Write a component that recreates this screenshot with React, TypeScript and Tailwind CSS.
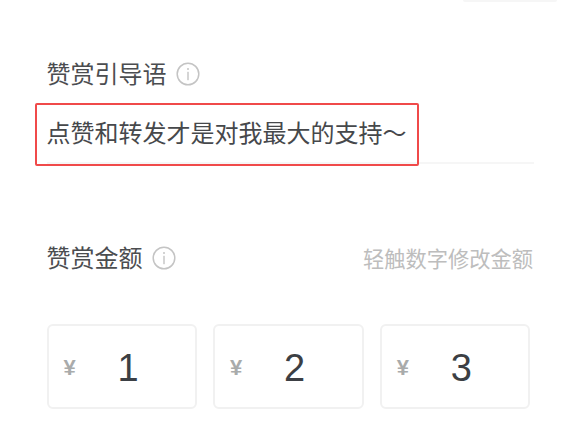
const cjk = "font-['Noto_Sans_CJK_SC','Noto_Sans_CJK_JP',sans-serif]";

function Info() {
  return (
    <svg width="24" height="24" viewBox="0 0 24 24" fill="none" className="shrink-0 translate-y-px">
      <circle cx="12" cy="12" r="10.8" stroke="#c4c4c4" strokeWidth="1.5" />
      <circle cx="12" cy="7" r="1" fill="#c4c4c4" />
      <rect x="11.3" y="9.8" width="1.4" height="8.4" fill="#c4c4c4" />
    </svg>
  );
}

function Amount({ n }: { n: string }) {
  return (
    <div className="w-[150.6px] h-[85px] rounded-md border-2 border-[#f1f1f1] bg-white flex items-center pl-[15px] pt-[2px]">
      <span className="w-[14px] text-[22px] leading-none text-[#a9abab] font-['Liberation_Sans',sans-serif] font-bold">¥</span>
      <span className="ml-[40px] text-[38px] leading-none text-[#3c3f44] font-['Liberation_Sans',sans-serif]">{n}</span>
    </div>
  );
}

export default function App() {
  return (
    <div className={`relative w-[580px] h-[421px] overflow-hidden bg-white ${cjk}`}>
      <div className="absolute right-[23px] top-0 w-[94px] h-[2px] rounded-b-full bg-[#f6f6f6]" />
      <div className="pl-[46.5px] pr-[46px] pt-[55px]">
        <div className="flex items-center gap-[9.5px] h-[36px]">
          <span className="text-[24px] leading-[36px] text-[#4b4d50]">赞赏引导语</span>
          <Info />
        </div>
        <div className="relative mt-[12px] h-[61px] pb-[2px] border-b-2 border-[#f6f6f6] flex items-center">
          <span className="text-[24px] leading-[36px] text-[#46484b] whitespace-nowrap">点赞和转发才是对我最大的支持～</span>
          <div className="absolute left-[-12px] top-0 w-[384px] h-[63px] border-2 border-[#f04a4a] rounded-[2px]" />
        </div>
        <div className="mt-[75px] flex items-center justify-between h-[36px]">
          <div className="flex items-center gap-[9.5px]">
            <span className="text-[24px] leading-[36px] text-[#4b4d50]">赞赏金额</span>
            <Info />
          </div>
          <span className="mr-[1px] mt-[2px] text-[21.25px] leading-[36px] text-[#bdbdbd] whitespace-nowrap">轻触数字修改金额</span>
        </div>
        <div className="mt-[49px] flex gap-[16px]">
          <Amount n="1" />
          <Amount n="2" />
          <Amount n="3" />
        </div>
      </div>
    </div>
  );
}
